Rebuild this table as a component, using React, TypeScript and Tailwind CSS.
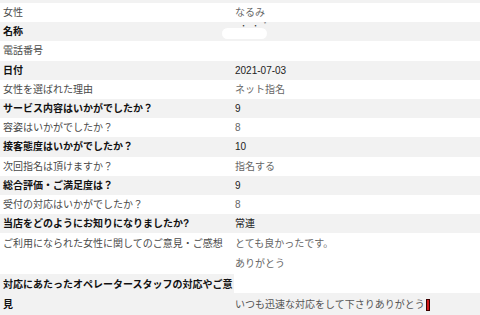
import React from "react";

type Row = { label: string; value: React.ReactNode; gray: boolean };

const rows: Row[] = [
  { label: "女性", value: "なるみ", gray: false },
  { label: "名称", value: "", gray: true },
  { label: "電話番号", value: "", gray: false },
  { label: "日付", value: "2021-07-03", gray: true },
  { label: "女性を選ばれた理由", value: "ネット指名", gray: false },
  { label: "サービス内容はいかがでしたか？", value: "9", gray: true },
  { label: "容姿はいかがでしたか？", value: "8", gray: false },
  { label: "接客態度はいかがでしたか？", value: "10", gray: true },
  { label: "次回指名は頂けますか？", value: "指名する", gray: false },
  { label: "総合評価・ご満足度は？", value: "9", gray: true },
  { label: "受付の対応はいかがでしたか？", value: "8", gray: false },
  { label: "当店をどのようにお知りになりましたか?", value: "常連", gray: true },
];

export default function App() {
  return (
    <div
      className="relative w-[480px] h-[315px] overflow-hidden bg-white text-[10px]"
      style={{ fontFamily: '"Liberation Sans", "Noto Sans CJK JP", sans-serif' }}
    >
      <div className="h-[3px] bg-[#f2f2f2]" />
      {rows.map((r, i) => (
        <div
          key={i}
          className={`flex h-[19.2px] items-center ${r.gray ? "bg-[#f2f2f2]" : "bg-white"}`}
        >
          <div
            className={`w-[234px] shrink-0 pl-[3px] ${
              r.gray ? "font-bold text-[#111]" : "text-[#4a4a4a]"
            }`}
          >
            {r.label}
          </div>
          <div className={`pl-[1px] ${r.gray ? "text-[#222]" : "text-[#666]"}`}>
            {r.value}
          </div>
        </div>
      ))}
      <div className="flex bg-white pt-[1px] leading-[20px]">
        <div className="w-[234px] shrink-0 pl-[3px] text-[#4a4a4a]">
          ご利用になられた女性に関してのご意見・ご感想
        </div>
        <div className="pl-[1px] text-[#666]">
          <div>とても良かったです。</div>
          <div>ありがとう</div>
        </div>
      </div>
      <div className="flex leading-[20px]">
        <div className="w-[234px] shrink-0 bg-[#f2f2f2] pb-[3px] pl-[3px] pt-[1px] font-bold text-[#111]">
          対応にあたったオペレータースタッフの対応やご意見
        </div>
        <div className="flex flex-1 flex-col">
          <div className="h-[19px] bg-white" />
          <div className="flex h-[22px] items-center bg-[#f2f2f2] pl-[1px] pt-[1px] text-[#555]">
            いつも迅速な対応をして下さりありがとう
            <span className="ml-[1px] inline-block h-[12px] w-[4px] border border-[#3a0000] bg-[#d11a1a]" />
          </div>
        </div>
      </div>
      {/* redaction over 名称 value */}
      <div className="absolute left-[240px] top-[21px] text-[7px] text-[#333] tracking-[5px]">
        ・・゛
      </div>
      <div className="absolute left-[222px] top-[28px] h-[11px] w-[45px] rounded-full bg-white" />
    </div>
  );
}
